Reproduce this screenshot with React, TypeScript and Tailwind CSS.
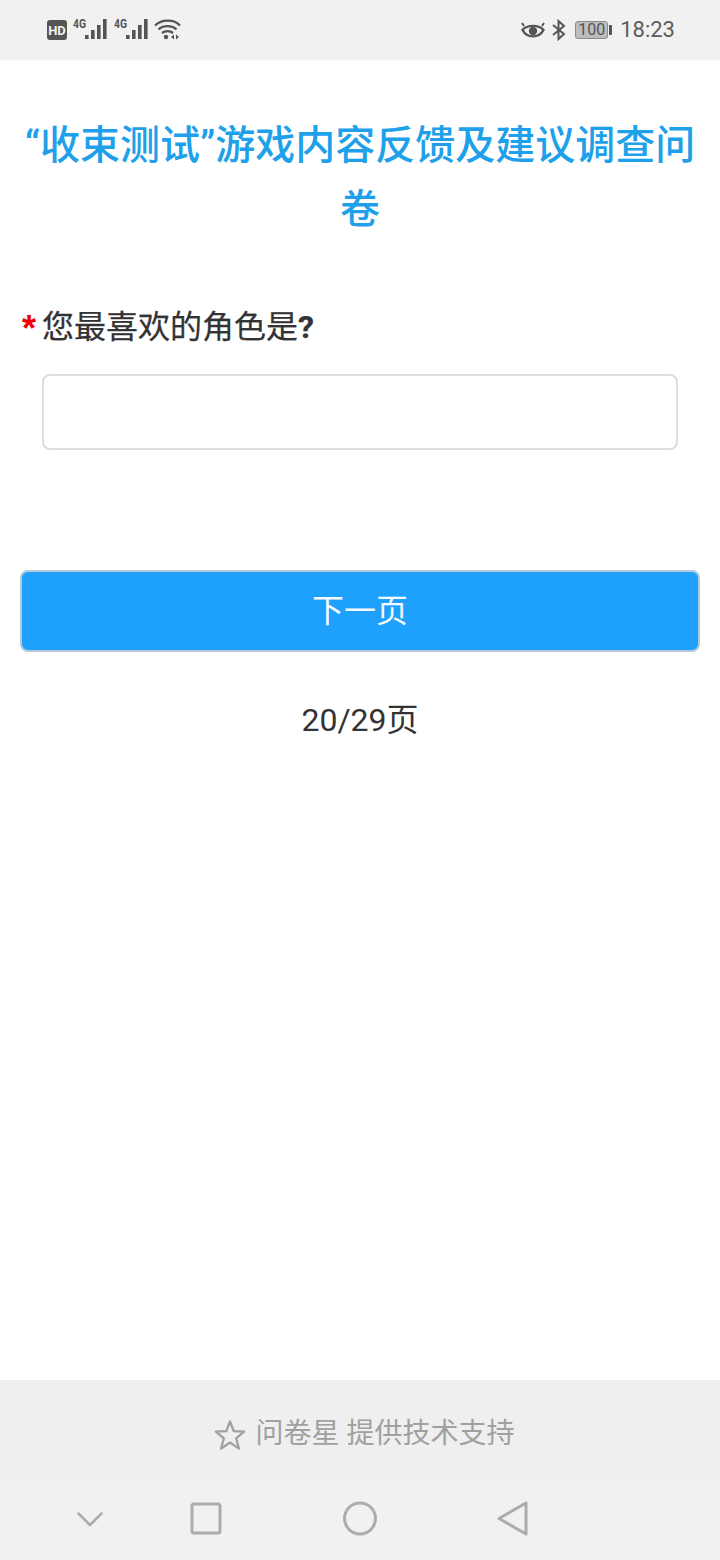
const FONT = "font-['Roboto','Noto_Sans_CJK_SC',sans-serif]";

function Signal({ x }: { x: number }) {
  return (
    <g transform={`translate(${x} 0)`} fill="#555">
      <text x="0" y="10" fontSize="12" fontWeight="700" fontFamily="Roboto, sans-serif" textLength="13" lengthAdjust="spacingAndGlyphs">4G</text>
      <rect x="12" y="17" width="3.600" height="4" />
      <rect x="18" y="12" width="3.600" height="9" />
      <rect x="24" y="7" width="3.600" height="14" />
      <rect x="30" y="1" width="3.600" height="20" />
    </g>
  );
}

function StatusLeft() {
  return (
    <div className="flex items-center">
      <div className="flex h-[20px] w-[20px] items-center justify-center rounded-[3px] bg-[#555] text-[13px] leading-none font-bold text-[#f1f1f1]">HD</div>
      <svg width="112" height="24" viewBox="0 0 112 24" className="ml-[6px]">
        <Signal x={0} />
        <Signal x={41} />
        <g fill="none" stroke="#555" strokeWidth="2.400">
          <path d="M82 7.500 C88.500 1 101 1 107 7.500" />
          <path d="M85.500 11.500 C90 7 99 7 103.500 11.500" />
          <path d="M89 15 C92 12.500 97 12.500 100 15" />
        </g>
        <circle cx="93" cy="19" r="2.200" fill="#555" />
        <path d="M98 19 l3 -2.500 v5 z M103 16.500 l3 2.500 l-3 2.500 z" fill="#555" />
      </svg>
    </div>
  );
}

function StatusRight() {
  return (
    <div className="flex items-center">
      <svg width="24" height="20" viewBox="0 0 24 20" fill="none" stroke="#555">
        <path d="M1.500 10 C6 4.500 18 4.500 22.500 10 C18 18.500 6 18.500 1.500 10 Z" strokeWidth="2.400" />
        <circle cx="12" cy="11" r="4.200" fill="#555" stroke="none" />
        <path d="M3 6 L1 3 M21 6 L23 3" strokeWidth="2" />
      </svg>
      <svg width="16" height="22" viewBox="0 0 16 22" fill="none" stroke="#555" strokeWidth="2" className="ml-[6px]">
        <path d="M2 6 L13 15 L7.500 20 V2 L13 7 L2 16" />
      </svg>
      <div className="relative ml-[8px] flex h-[18px] w-[33px] items-center justify-center rounded-[3px] border border-[#8a8a8a] bg-[#bdbdbd] text-[16px] leading-none text-[#555]">100</div>
      <div className="ml-[1px] h-[10px] w-[3px] rounded-r-[1px] bg-[#555]" />
      <div className="ml-[8px] text-[22px] leading-none text-[#5c5c5c]">18:23</div>
    </div>
  );
}

export default function App() {
  return (
    <div className={`${FONT} flex h-[1560px] w-[720px] flex-col bg-white`}>
      <div className="flex h-[60px] items-center justify-between bg-[#f1f1f1] pr-[45px] pl-[47px]">
        <StatusLeft />
        <StatusRight />
      </div>

      <main className="flex flex-1 flex-col">
        <h1 className="mt-[54px] px-[20px] text-center text-[40px] leading-[64px] font-medium text-[#1ea0ea]">“收束测试”游戏内容反馈及建议调查问卷</h1>

        <div className="mt-[65px] flex h-[40px] items-center pl-[22px] text-[32px] leading-[40px] font-normal text-[#333]">
          <span className="mt-[4px] w-[20px] font-['Liberation_Sans'] text-[36px] font-bold text-[#ee0000]">*</span>
          <span className="[-webkit-text-stroke:0.25px_#333]">您最喜欢的角色是<b className="font-bold">?</b></span>
        </div>

        <div className="mt-[27px] ml-[42px] h-[76px] w-[636px] rounded-[8px] border-2 border-[#dcdcdc] bg-white" />

        <button className="mt-[120px] ml-[20px] h-[82px] w-[680px] rounded-[8px] border-2 border-[#b5c9d8] bg-[#1ea0fd] text-[32px] leading-none text-[#f4f9ff]">下一页</button>

        <div className="mt-[46px] text-center text-[32px] leading-[44px] text-[#333]">20/29页</div>
      </main>

      <footer className="flex h-[98px] items-center justify-center bg-[#efefef] pt-[10px] pl-[8px] text-[28px] leading-none text-[#a0a0a0]">
        <svg width="32" height="34" viewBox="0 0 34 34" fill="none" stroke="#a0a0a0" strokeWidth="2.400" strokeLinejoin="round" className="mt-[1px] mr-[10px]">
          <path d="M17 2.500 L21 13 L32 13.500 L23.500 20.500 L26.500 31.500 L17 25 L7.500 31.500 L10.500 20.500 L2 13.500 L13 13 Z" />
        </svg>
        <span>问卷星 提供技术支持</span>
      </footer>

      <nav className="flex h-[82px] items-center bg-[#f1f1f1] pb-[2px]">
        <svg width="720" height="50" viewBox="0 0 720 50" fill="none" stroke="#acacac" strokeWidth="3" strokeLinejoin="round" strokeLinecap="round">
          <path d="M78.500 20.500 L90 32 L101.500 20.500" strokeWidth="2.500" />
          <rect x="192" y="11" width="28" height="29" rx="2" />
          <ellipse cx="360" cy="25.500" rx="15.500" ry="15.500" />
          <path d="M526 10 V41 L499 25.500 Z" />
        </svg>
      </nav>
    </div>
  );
}
